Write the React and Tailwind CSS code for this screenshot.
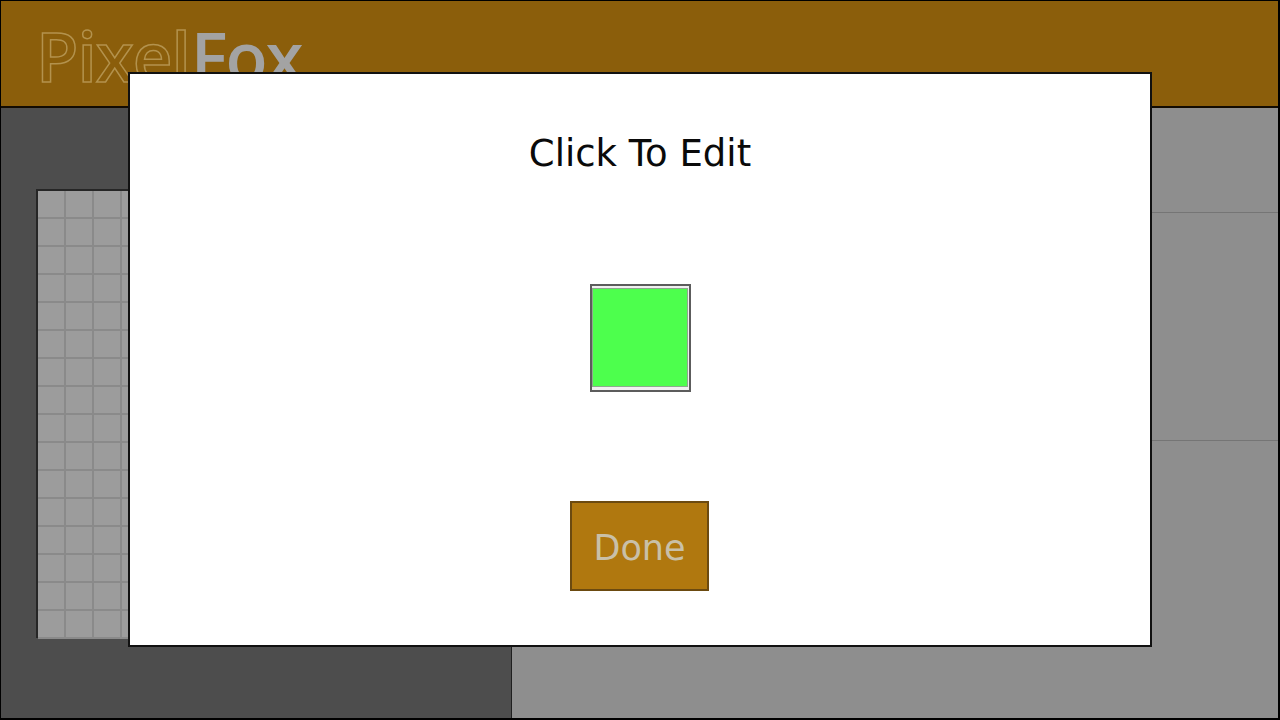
const cells = Array.from({ length: 256 }, (_, i) => i)

export default function App() {
  return (
    <div className="relative w-[1280px] h-[720px] overflow-hidden flex flex-col border-t border-l border-r-2 border-b-2 border-black bg-[#4d4d4d]">
      {/* Header */}
      <div className="h-[107px] shrink-0 bg-[#8b5e0b] border-b-2 border-[#120b02] pl-[35px] pt-[8px]">
        <span className="font-['Open_Sans',sans-serif] text-[69px] leading-[92px] font-semibold tracking-[-1px]">
          <span className="text-transparent [-webkit-text-stroke:1.5px_#b3924d]">Pixel</span>
          <span className="ml-[1px] tracking-[-2px] text-[#a3a3a3]">Fox</span>
        </span>
      </div>

      {/* Workspace */}
      <div className="flex-1 flex min-h-0">
        <div className="w-[510px] shrink-0 bg-[#4d4d4d] pl-[35px] pt-[81px]">
          <div className="w-[450px] h-[449px] border-t-2 border-l-2 border-[#262626] grid grid-cols-[repeat(16,28px)] grid-rows-[repeat(16,28px)] bg-[#9c9c9c]">
            {cells.map(c => (
              <div key={c} className="border-r-2 border-b-2 border-[#8a8a8a]" />
            ))}
          </div>
        </div>
        <div className="flex-1 flex flex-col bg-[#8e8e8e] border-l border-[#1f1f1f]">
          <div className="h-[105px] border-b border-[#757575]" />
          <div className="h-[228px] border-b border-[#757575]" />
          <div className="flex-1" />
        </div>
      </div>

      {/* Edit dialog */}
      <div className="absolute left-[127px] top-[71px] w-[1024px] h-[575px] bg-white border-2 border-[#111111] flex flex-col items-center font-['DejaVu_Sans',sans-serif]">
        <h2 className="mt-[53px] text-[37px] leading-[54px] text-[#0a0a0a] font-normal">Click To Edit</h2>
        <div className="mt-[103px] w-[101px] h-[108px] border-2 border-[#5c5c5c] bg-[#f0f0f0] pt-[2px] pb-[3px] pr-[1px]">
          <div className="w-full h-full bg-[#4dff4d] border border-[#8fa88f]" />
        </div>
        <button className="mt-[109px] mr-[1px] w-[139px] h-[90px] pt-[5px] bg-[#b0780f] border-2 border-[#6b4a10] text-[#c9c0a8] text-[35px]">
          Done
        </button>
      </div>
    </div>
  )
}
